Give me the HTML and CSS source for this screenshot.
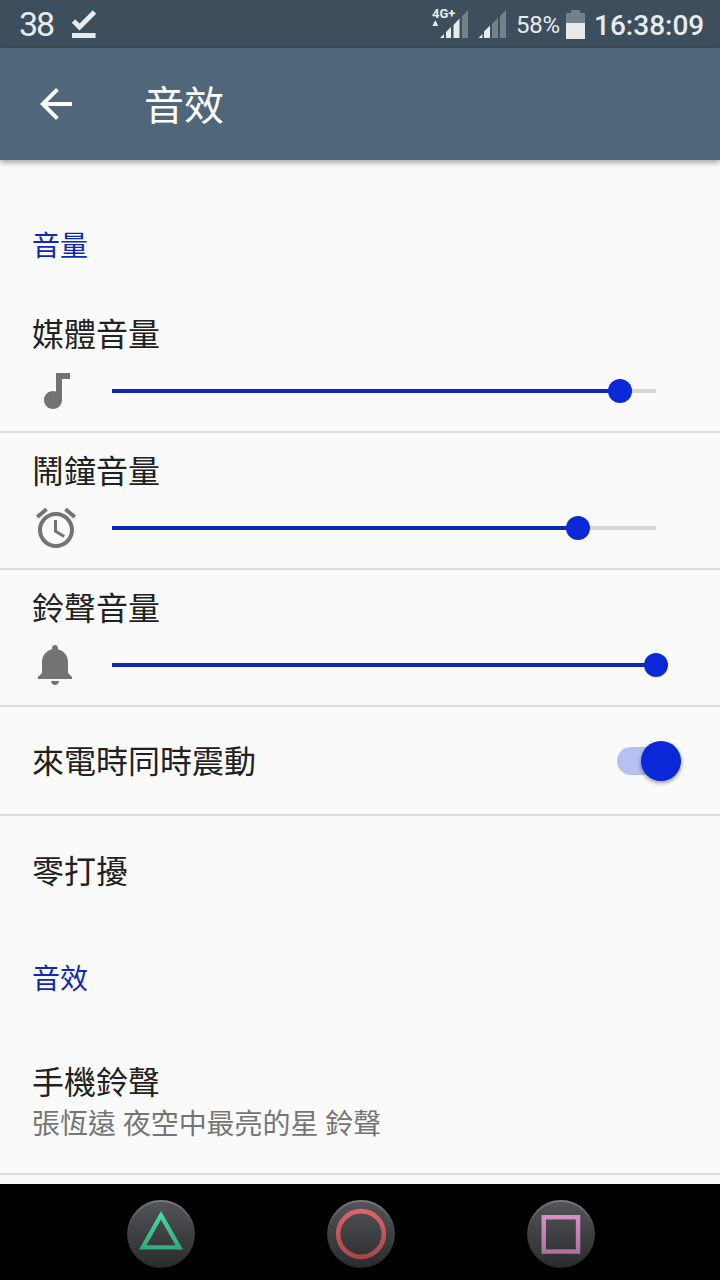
FILE: index.html
```html
<!DOCTYPE html>
<html lang="zh-Hant">
<head>
    <meta charset="UTF-8">
    <meta name="viewport" content="width=device-width, initial-scale=1.0">
    <title>音效</title>
    <link rel="stylesheet" href="styles.css">
</head>
<body>
    <div class="status-bar">
        <span class="status-count">38</span>
        <svg class="status-done" width="26" height="30" viewBox="0 0 26 30">
            <path d="M2.5 12l6 6L23.500 3" fill="none" stroke="#e8ebee" stroke-width="4.8"/>
            <path d="M1 24h23.600v5H1z" fill="#e8ebee"/>
        </svg>
        <div class="status-right">
            <div class="signal-data">
                <span class="network">4G+</span>
                <svg width="36" height="30" viewBox="0 0 36 30">
                    <path d="M.4 17L3.300 11l2.900 6z" fill="#e8ebee"/>
                    <path d="M8 29l4-4v4zM14 23l5-5v11h-5zM21.500 16l6-6.500V29h-6z" fill="#e8ebee"/>
                    <path d="M30 7.500L36 1v28h-6z" fill="#73818c"/>
                </svg>
            </div>
            <svg class="signal" width="28" height="30" viewBox="0 0 28 30">
                <path d="M.5 29l4-4v4zM6 22.500l6-6V29H6z" fill="#e8ebee"/>
                <path d="M14 15l6-6.500V29h-6zM22 7l6-6v28h-6z" fill="#73818c"/>
            </svg>
            <span class="battery-level">58%</span>
            <svg class="battery" width="19" height="29" viewBox="0 0 19 29">
                <path d="M0 3h5V0h9v3h5v10.500H0z" fill="#73818c"/>
                <path d="M0 13h19v16H0z" fill="#e8ebee"/>
            </svg>
            <span class="clock">16:38:09</span>
        </div>
    </div>

    <header class="app-bar">
        <svg class="icon" viewBox="0 0 24 24">
            <path d="M20 11H7.830l5.590-5.590L12 4l-8 8 8 8 1.410-1.410L7.830 13H20v-2z"/>
        </svg>
        <h1>音效</h1>
    </header>

    <main class="settings">
        <h2 class="category category-first">音量</h2>

        <div class="volume">
            <div class="title">媒體音量</div>
            <div class="slider-row">
                <svg class="icon" viewBox="0 0 24 24">
                    <path d="M12 3v9.280c-.47-.17-.97-.28-1.500-.28C8.010 12 6 14.010 6 16.500S8.010 21 10.500 21c2.310 0 4.200-1.750 4.450-4H15V6h4V3h-7z"/>
                </svg>
                <div class="slider">
                    <div class="slider-fill" style="width: 93.4%"><span class="thumb"></span></div>
                </div>
            </div>
        </div>

        <div class="volume">
            <div class="title">鬧鐘音量</div>
            <div class="slider-row">
                <svg class="icon" viewBox="0 0 24 24">
                    <path d="M22 5.720l-4.600-3.860-1.290 1.530 4.600 3.860L22 5.720zM7.880 3.390L6.600 1.860 2 5.710l1.290 1.530 4.590-3.850zM12.500 8H11v6l4.750 2.850.75-1.230-4-2.370V8zM12 4c-4.970 0-9 4.030-9 9s4.020 9 9 9c4.970 0 9-4.030 9-9s-4.030-9-9-9zm0 16c-3.870 0-7-3.130-7-7s3.130-7 7-7 7 3.130 7 7-3.130 7-7 7z"/>
                </svg>
                <div class="slider">
                    <div class="slider-fill" style="width: 85.7%"><span class="thumb"></span></div>
                </div>
            </div>
        </div>

        <div class="volume">
            <div class="title">鈴聲音量</div>
            <div class="slider-row">
                <svg class="icon" viewBox="0 0 24 24">
                    <path d="M11.500 22c1.100 0 2-.9 2-2h-4c0 1.100.9 2 2 2zm6.500-6v-5.500c0-3.070-2.130-5.640-5-6.320V3.500c0-.83-.67-1.500-1.500-1.500S10 2.670 10 3.500v.68c-2.870.68-5 3.250-5 6.320V16l-2 2v1h17v-1l-2-2z"/>
                </svg>
                <div class="slider">
                    <div class="slider-fill" style="width: 100%"><span class="thumb"></span></div>
                </div>
            </div>
        </div>

        <div class="row row-line">
            <div class="title">來電時同時震動</div>
            <div class="switch"><span class="knob"></span></div>
        </div>

        <div class="row">
            <div class="title">零打擾</div>
        </div>

        <h2 class="category">音效</h2>

        <div class="ringtone">
            <div class="title">手機鈴聲</div>
            <div class="summary">張恆遠 夜空中最亮的星 鈴聲</div>
        </div>
    </main>

    <nav class="nav-bar">
        <svg class="nav-button" viewBox="0 0 69 69">
            <defs>
                <linearGradient id="face" x1="0" y1="0" x2="0" y2="1">
                    <stop offset="0" stop-color="#535457"/>
                    <stop offset="1" stop-color="#2b2c2e"/>
                </linearGradient>
                <linearGradient id="rim" x1="0" y1="0" x2="0" y2="1">
                    <stop offset="0" stop-color="#77787b"/>
                    <stop offset="0.35" stop-color="#48494b"/>
                    <stop offset="1" stop-color="#29292b"/>
                </linearGradient>
                <linearGradient id="green" x1="0" y1="0" x2="0" y2="1">
                    <stop offset="0" stop-color="#43d9a0"/>
                    <stop offset="1" stop-color="#32ad80"/>
                </linearGradient>
                <linearGradient id="red" x1="0" y1="0" x2="0" y2="1">
                    <stop offset="0" stop-color="#df6368"/>
                    <stop offset="1" stop-color="#a9484c"/>
                </linearGradient>
                <linearGradient id="pink" x1="0" y1="0" x2="0" y2="1">
                    <stop offset="0" stop-color="#d98fc4"/>
                    <stop offset="1" stop-color="#b0719f"/>
                </linearGradient>
            </defs>
            <circle cx="34.500" cy="34.500" r="33.400" fill="url(#face)" stroke="url(#rim)" stroke-width="2"/>
            <path d="M34.500 15.500L53 48H16z" fill="none" stroke="url(#green)" stroke-width="4.400"/>
        </svg>
        <svg class="nav-button" viewBox="0 0 69 69">
            <circle cx="34.500" cy="34.500" r="33.400" fill="url(#face)" stroke="url(#rim)" stroke-width="2"/>
            <circle cx="34.500" cy="34.500" r="23.200" fill="none" stroke="url(#red)" stroke-width="4.600"/>
        </svg>
        <svg class="nav-button" viewBox="0 0 69 69">
            <circle cx="34.500" cy="34.500" r="33.400" fill="url(#face)" stroke="url(#rim)" stroke-width="2"/>
            <rect x="17" y="17.500" width="34.800" height="34.800" fill="none" stroke="url(#pink)" stroke-width="4.500"/>
        </svg>
    </nav>
</body>
</html>
```
FILE: styles.css
```css
* {
    box-sizing: border-box;
}

body {
    margin: 0;
    width: 720px;
    height: 1280px;
    display: flex;
    flex-direction: column;
    overflow: hidden;
    background-color: #fafafa;
    font-family: Roboto, "Noto Sans CJK TC", sans-serif;
    color: #212121;
}

svg {
    display: block;
    flex-shrink: 0;
}

h1, h2 {
    margin: 0;
    font-weight: 400;
}

/* Status bar */
.status-bar {
    height: 48px;
    flex-shrink: 0;
    display: flex;
    align-items: center;
    padding: 0 16px 0 19px;
    background-color: #3d4e5c;
    color: #e8ebee;
}

.status-count {
    width: 52px;
    font-size: 34px;
    font-weight: 400;
    letter-spacing: -2px;
}

.status-right {
    display: flex;
    align-items: center;
    margin-left: auto;
}

.signal-data {
    position: relative;
    margin-right: 10px;
}

.network {
    position: absolute;
    left: 0;
    top: -2px;
    font-size: 13px;
    line-height: 14px;
    font-weight: 700;
}

.signal {
    margin-right: 10px;
}

.battery-level {
    width: 50px;
    padding-top: 2px;
    font-size: 24px;
    letter-spacing: -0.3px;
}

.battery {
    margin-right: 9px;
}

.clock {
    width: 110px;
    padding-top: 2px;
    font-size: 28px;
    font-weight: 500;
    white-space: nowrap;
}

/* App bar */
.app-bar {
    position: relative;
    height: 112px;
    flex-shrink: 0;
    display: flex;
    align-items: center;
    gap: 64px;
    padding-left: 32px;
    background-color: #506679;
    box-shadow: 0 2px 6px rgba(0, 0, 0, 0.4);
    color: #fff;
}

.app-bar h1 {
    padding-top: 5px;
    font-size: 40px;
    line-height: 56px;
}

.icon {
    width: 48px;
    height: 48px;
    fill: #737373;
}

.app-bar .icon {
    fill: #fff;
}

/* Settings list */
.settings {
    flex: 1;
    min-height: 0;
    overflow: hidden;
}

.category {
    height: 106px;
    padding: 35px 32px 0;
    font-size: 28px;
    line-height: 40px;
    color: #1029b5;
}

.category-first {
    height: 135.5px;
    padding-top: 67px;
}

.title {
    font-size: 32px;
    line-height: 40px;
}

.volume {
    height: 137.2px;
    padding: 19px 64px 0 32px;
    border-bottom: 2px solid #dcdcdc;
}

.slider-row {
    display: flex;
    align-items: center;
    gap: 32px;
    margin-top: 12px;
}

.slider {
    flex: 1;
    height: 4px;
    background-color: #d6d6d6;
}

.slider-fill {
    position: relative;
    height: 4px;
    background-color: #1029b5;
}

.thumb {
    position: absolute;
    right: -12px;
    top: -10px;
    width: 24px;
    height: 24px;
    border-radius: 50%;
    background-color: #0a27d8;
}

.row {
    height: 109px;
    display: flex;
    align-items: center;
    justify-content: space-between;
    padding: 2px 47px 0 32px;
}

.row-line {
    border-bottom: 2px solid #dcdcdc;
}

.switch {
    position: relative;
    width: 56px;
    height: 28px;
    margin-bottom: 2px;
    border-radius: 14px;
    background-color: #b7c0f0;
}

.knob {
    position: absolute;
    right: -8px;
    top: -6px;
    width: 40px;
    height: 40px;
    border-radius: 50%;
    background-color: #0a27d8;
    box-shadow: 0 2px 4px rgba(0, 0, 0, 0.4);
}

.ringtone {
    height: 144px;
    padding: 32px 32px 0;
    border-bottom: 2px solid #dcdcdc;
}

.summary {
    margin-top: 2px;
    font-size: 28px;
    line-height: 40px;
    letter-spacing: -0.05px;
    color: #757575;
}

/* Navigation bar */
.nav-bar {
    height: 96px;
    flex-shrink: 0;
    display: flex;
    align-items: center;
    gap: 132px;
    padding: 4px 0 0 127px;
    background-color: #000;
}

.nav-button {
    width: 68px;
    height: 68px;
}
```
